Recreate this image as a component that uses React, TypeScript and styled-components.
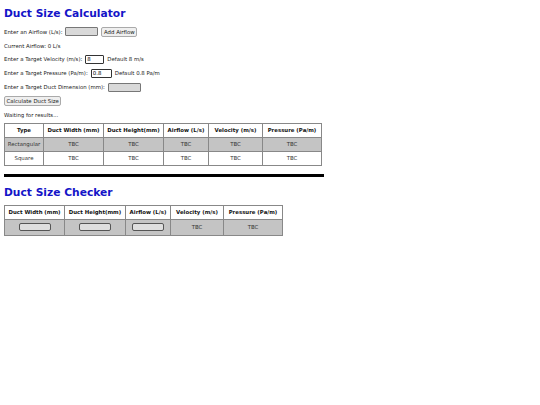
import * as React from 'react';
import styled, { createGlobalStyle } from 'styled-components';

const GlobalStyle = createGlobalStyle`
  html, body {
    margin: 0;
    padding: 0;
    background: #ffffff;
  }
  body {
    font-family: "DejaVu Sans", Verdana, sans-serif;
    color: #222;
  }
`;

const Page = styled.div`
  padding: 6px 4px;
  width: 540px;
  box-sizing: border-box;
`;

const Title = styled.h1<{ $after: number }>`
  margin: 0 0 ${(p) => p.$after}px 0;
  font-size: 10.7px;
  line-height: 15px;
  font-weight: bold;
  color: #1414c8;
`;

const Line = styled.div`
  display: flex;
  align-items: center;
  gap: 3px;
  height: 13.8px;
  font-size: 5.4px;
`;

const TextInput = styled.input<{ $width: number; $filled?: boolean }>`
  box-sizing: border-box;
  width: ${(p) => p.$width}px;
  height: 9px;
  margin: 0;
  padding: 0 1px;
  font-family: inherit;
  font-size: 5.4px;
  border: 1px solid ${(p) => (p.$filled ? '#333' : '#777')};
  border-radius: 1px;
  background: ${(p) => (p.$filled ? '#fff' : '#d9d9d9')};
  outline: none;
`;

const Button = styled.button`
  box-sizing: border-box;
  height: 10px;
  margin: 0;
  padding: 0 1.5px;
  font-family: inherit;
  font-size: 5.4px;
  color: #222;
  border: 1px solid #aaa;
  border-radius: 2px;
  background: #efefef;
`;

const Table = styled.table`
  border-collapse: collapse;
  font-size: 5.4px;
  margin-top: 1px;
`;

const Th = styled.th<{ $w: number }>`
  width: ${(p) => p.$w}px;
  height: 14px;
  padding: 0;
  box-sizing: border-box;
  border: 1px solid #888;
  font-weight: bold;
  text-align: center;
  color: #111;
  background: #fff;
`;

const Row = styled.tr<{ $shade?: boolean }>`
  background: ${(p) => (p.$shade ? '#c4c4c4' : '#fff')};
`;

const Td = styled.td`
  height: 14px;
  padding: 0;
  box-sizing: border-box;
  border: 1px solid #888;
  text-align: center;
  color: #333;
`;

const CheckTd = styled(Td)`
  height: 16px;
`;

const CellInput = styled.input`
  box-sizing: border-box;
  display: block;
  width: 32px;
  height: 8px;
  margin: 0 auto;
  padding: 0;
  border: 1px solid #555;
  border-radius: 2px;
  background: #dedede;
`;

const Divider = styled.hr`
  width: 320px;
  margin: 8px 0 8px 0;
  border: none;
  height: 3px;
  background: #000;
`;

const calcCols = [
  { label: 'Type', w: 39 },
  { label: 'Duct Width (mm)', w: 60 },
  { label: 'Duct Height(mm)', w: 60 },
  { label: 'Airflow (L/s)', w: 45 },
  { label: 'Velocity (m/s)', w: 54 },
  { label: 'Pressure (Pa/m)', w: 59 },
];

const checkCols = [
  { label: 'Duct Width (mm)', w: 60 },
  { label: 'Duct Height(mm)', w: 61 },
  { label: 'Airflow (L/s)', w: 45 },
  { label: 'Velocity (m/s)', w: 53 },
  { label: 'Pressure (Pa/m)', w: 59 },
];

const App: React.FC = () => (
  <Page>
    <GlobalStyle />
    <Title $after={4}>Duct Size Calculator</Title>
    <Line>
      Enter an Airflow (L/s):
      <TextInput $width={33} />
      <Button>Add Airflow</Button>
    </Line>
    <Line>Current Airflow: 0 L/s</Line>
    <Line>
      Enter a Target Velocity (m/s):
      <TextInput $width={19} $filled defaultValue="8" />
      Default 8 m/s
    </Line>
    <Line>
      Enter a Target Pressure (Pa/m):
      <TextInput $width={21} $filled defaultValue="0.8" />
      Default 0.8 Pa/m
    </Line>
    <Line>
      Enter a Target Duct Dimension (mm):
      <TextInput $width={33} />
    </Line>
    <Line>
      <Button>Calculate Duct Size</Button>
    </Line>
    <Line>Waiting for results...</Line>
    <Table>
      <thead>
        <tr>
          {calcCols.map((c) => (
            <Th key={c.label} $w={c.w}>{c.label}</Th>
          ))}
        </tr>
      </thead>
      <tbody>
        <Row $shade>
          <Td>Rectangular</Td>
          {[0, 1, 2, 3, 4].map((i) => <Td key={i}>TBC</Td>)}
        </Row>
        <Row>
          <Td>Square</Td>
          {[0, 1, 2, 3, 4].map((i) => <Td key={i}>TBC</Td>)}
        </Row>
      </tbody>
    </Table>
    <Divider />
    <Title $after={5}>Duct Size Checker</Title>
    <Table>
      <thead>
        <tr>
          {checkCols.map((c) => (
            <Th key={c.label} $w={c.w}>{c.label}</Th>
          ))}
        </tr>
      </thead>
      <tbody>
        <Row $shade>
          <CheckTd><CellInput /></CheckTd>
          <CheckTd><CellInput /></CheckTd>
          <CheckTd><CellInput /></CheckTd>
          <CheckTd>TBC</CheckTd>
          <CheckTd>TBC</CheckTd>
        </Row>
      </tbody>
    </Table>
  </Page>
);

export default App;
